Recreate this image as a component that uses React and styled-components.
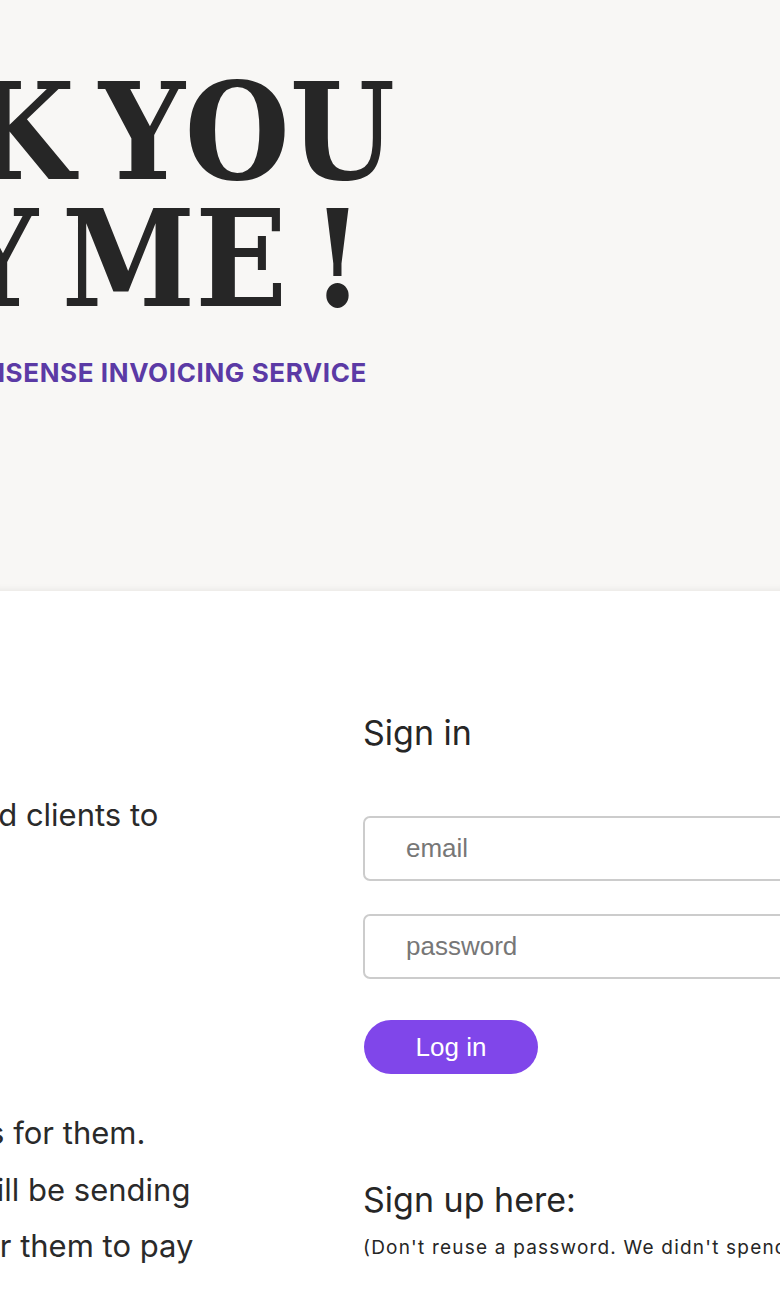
import React from "react";
import styled, { createGlobalStyle } from "styled-components";

const GlobalStyle = createGlobalStyle`
  body {
    margin: 0;
    background: #ffffff;
    font-family: Inter, "Noto Sans", sans-serif;
    color: #262626;
  }
`;

const App = () => {
  return (
    <Page>
      <GlobalStyle />
      <Hero>
        <Inner>
          <HeroContent>
            <Title>
              <TitleLine>THANK YOU</TitleLine>
              <TitleLine $inset={31}>PAY ME !</TitleLine>
            </Title>
            <Tagline>NO NONSENSE INVOICING SERVICE</Tagline>
          </HeroContent>
        </Inner>
      </Hero>
      <Main>
        <Inner>
          <Columns>
            <About>
              <SectionTitle>About</SectionTitle>
              <Paragraph>
                Freelancers and clients to
                <br />
                get paid.
              </Paragraph>
              <Paragraph>
                No fees.
                <br />
                No ads.
              </Paragraph>
              <Paragraph>
                We do invoices for them.
                <br />
                And now we will be sending
                <br />
                notifications for them to pay
              </Paragraph>
            </About>
            <Auth>
              <SectionTitle>Sign in</SectionTitle>
              <Form onSubmit={(e) => e.preventDefault()}>
                <Field type="email" placeholder="email" />
                <Field type="password" placeholder="password" />
                <Button type="submit">Log in</Button>
              </Form>
              <SignUpTitle>Sign up here:</SignUpTitle>
              <Note>
                (Don't reuse a password. We didn't spend much time on security.)
              </Note>
            </Auth>
          </Columns>
        </Inner>
      </Main>
    </Page>
  );
};

export default App;

const Page = styled.div`
  width: 100%;
  min-height: 100vh;
  overflow: hidden;
`;

const Inner = styled.div`
  flex: none;
  width: 1216px;
`;

const Hero = styled.header`
  display: flex;
  justify-content: center;
  height: 591px;
  background: #f8f7f5;
  box-shadow: inset 0 -7px 7px -7px rgba(0, 0, 0, 0.07);
  border-bottom: 1px solid #efedea;
  box-sizing: border-box;
`;

const HeroContent = styled.div`
  display: flex;
  flex-direction: column;
  align-items: flex-end;
  width: 613px;
  padding-top: 69px;
`;

const Title = styled.h1`
  display: flex;
  flex-direction: column;
  align-items: flex-end;
  margin: 0;
  font-family: "DejaVu Serif Condensed", "DejaVu Serif", serif;
  font-stretch: condensed;
  font-weight: 700;
  font-size: 134px;
  line-height: 127px;
  word-spacing: -18px;
  color: #262626;
`;

const TitleLine = styled.span`
  white-space: nowrap;
  margin-right: ${(p) => p.$inset || 0}px;
`;

const Tagline = styled.p`
  margin: 34px 28px 0 0;
  font-family: Inter, sans-serif;
  font-weight: 700;
  font-size: 26px;
  line-height: 32px;
  letter-spacing: 0.6px;
  white-space: nowrap;
  color: #5b3aa5;
`;

const Main = styled.main`
  display: flex;
  justify-content: center;
`;

const Columns = styled.div`
  display: grid;
  grid-template-columns: 541px 1fr;
  column-gap: 40px;
  padding-top: 122px;
`;

const About = styled.section`
  display: flex;
  flex-direction: column;
`;

const Auth = styled.section`
  display: flex;
  flex-direction: column;
  align-items: flex-start;
`;

const SectionTitle = styled.h2`
  margin: 0;
  font-family: Inter, sans-serif;
  font-weight: 400;
  font-size: 34px;
  line-height: 40px;
  color: #262626;
`;

const Paragraph = styled.p`
  margin: 46px 0 0;
  font-family: Inter, sans-serif;
  font-size: 31px;
  line-height: 56.5px;
  white-space: nowrap;
  color: #2a2a2a;

  &:first-of-type {
    margin-top: 34px;
  }
`;

const Form = styled.form`
  display: flex;
  flex-direction: column;
  align-items: flex-start;
  width: 100%;
  margin-top: 63px;
`;

const Field = styled.input`
  box-sizing: border-box;
  width: 100%;
  height: 65px;
  margin-bottom: 33px;
  padding: 0 0 0 41px;
  border: 2px solid #cccccc;
  border-radius: 7px;
  background: #ffffff;
  font-family: "Liberation Sans", Arial, sans-serif;
  font-size: 26px;
  color: #262626;
  outline: none;

  &::placeholder {
    color: #777777;
  }

  &:last-of-type {
    margin-bottom: 41px;
  }
`;

const Button = styled.button`
  width: 174px;
  height: 54px;
  margin-left: 1px;
  border: none;
  border-radius: 27px;
  background: #8046ea;
  color: #ffffff;
  font-family: "Liberation Sans", Arial, sans-serif;
  font-size: 26px;
  cursor: pointer;
`;

const SignUpTitle = styled(SectionTitle)`
  margin-top: 106px;
`;

const Note = styled.p`
  margin: 16px 0 0;
  font-family: Inter, sans-serif;
  font-size: 19px;
  line-height: 24px;
  letter-spacing: 1.2px;
  white-space: nowrap;
  color: #262626;
`;
